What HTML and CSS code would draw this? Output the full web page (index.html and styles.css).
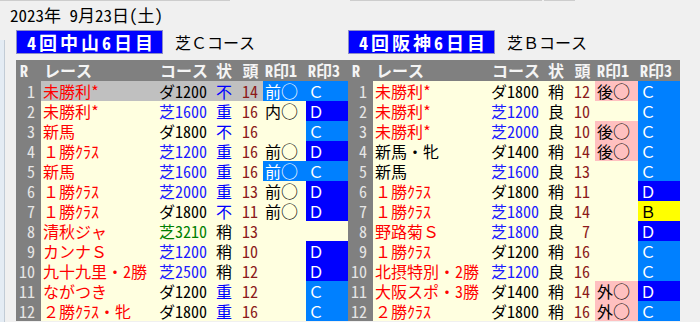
FILE: index.html
```html
<!DOCTYPE html>
<html lang="ja">
<head>
<meta charset="utf-8">
<title>開催</title>
<link rel="stylesheet" href="styles.css">
</head>
<body>
<div class="chrome"><span class="seg seg1"></span><span class="seg seg2"></span><span class="seg seg3"></span></div>
<div class="date">2023年 9月23日(土)</div>
<div class="meets">
  <section class="meet">
    <div class="meet-head"><span class="label">4回中山6日目</span><span class="track">芝Ｃコース</span></div>
    <table class="races">
      <colgroup><col class="c-r"><col class="c-name"><col class="c-crs"><col class="c-cond"><col class="c-cnt"><col class="c-m1"><col class="c-m3"></colgroup>
      <thead><tr><th class="h-r">R</th><th class="h-name">レース</th><th class="h-crs">コース</th><th class="h-cond">状</th><th class="h-cnt">頭</th><th class="h-m">R印1</th><th class="h-m">R印3</th></tr></thead>
      <tbody>
        <tr class="sel"><td class="n">1</td><td class="name red">未勝利*</td><td class="crs">ダ1200</td><td class="cond blue">不</td><td class="cnt">14</td><td class="m1 hl">前<span class="circ">○</span></td><td class="m3 c">Ｃ</td></tr>
        <tr><td class="n">2</td><td class="name red">未勝利*</td><td class="crs turf">芝1600</td><td class="cond blue">重</td><td class="cnt">16</td><td class="m1">内<span class="circ">○</span></td><td class="m3 d">Ｄ</td></tr>
        <tr><td class="n">3</td><td class="name red">新馬</td><td class="crs">ダ1800</td><td class="cond blue">不</td><td class="cnt">16</td><td class="m1"></td><td class="m3 c">Ｃ</td></tr>
        <tr><td class="n">4</td><td class="name red">１勝ｸﾗｽ</td><td class="crs turf">芝1200</td><td class="cond blue">重</td><td class="cnt">16</td><td class="m1">前<span class="circ">○</span></td><td class="m3 d">Ｄ</td></tr>
        <tr><td class="n">5</td><td class="name red">新馬</td><td class="crs turf">芝1600</td><td class="cond blue">重</td><td class="cnt">16</td><td class="m1 hl">前<span class="circ">○</span></td><td class="m3 c">Ｃ</td></tr>
        <tr><td class="n">6</td><td class="name red">１勝ｸﾗｽ</td><td class="crs turf">芝2000</td><td class="cond blue">重</td><td class="cnt">13</td><td class="m1">前<span class="circ">○</span></td><td class="m3 d">Ｄ</td></tr>
        <tr><td class="n">7</td><td class="name red">１勝ｸﾗｽ</td><td class="crs">ダ1800</td><td class="cond blue">不</td><td class="cnt">11</td><td class="m1">前<span class="circ">○</span></td><td class="m3 d">Ｄ</td></tr>
        <tr><td class="n">8</td><td class="name red">清秋ジャ</td><td class="crs green">芝3210</td><td class="cond">稍</td><td class="cnt">13</td><td class="m1"></td><td class="m3"></td></tr>
        <tr><td class="n">9</td><td class="name red">カンナＳ</td><td class="crs turf">芝1200</td><td class="cond">稍</td><td class="cnt">10</td><td class="m1"></td><td class="m3 d">Ｄ</td></tr>
        <tr><td class="n">10</td><td class="name red">九十九里・2勝</td><td class="crs turf">芝2500</td><td class="cond">稍</td><td class="cnt">12</td><td class="m1"></td><td class="m3 d">Ｄ</td></tr>
        <tr><td class="n">11</td><td class="name red">ながつき</td><td class="crs">ダ1200</td><td class="cond blue">重</td><td class="cnt">12</td><td class="m1"></td><td class="m3 c">Ｃ</td></tr>
        <tr><td class="n">12</td><td class="name red">２勝ｸﾗｽ・牝</td><td class="crs">ダ1800</td><td class="cond blue">重</td><td class="cnt">16</td><td class="m1"></td><td class="m3 c">Ｃ</td></tr>
      </tbody>
    </table>
  </section>
  <section class="meet">
    <div class="meet-head"><span class="label">4回阪神6日目</span><span class="track">芝Ｂコース</span></div>
    <table class="races">
      <colgroup><col class="c-r"><col class="c-name"><col class="c-crs"><col class="c-cond"><col class="c-cnt"><col class="c-m1"><col class="c-m3"></colgroup>
      <thead><tr><th class="h-r">R</th><th class="h-name">レース</th><th class="h-crs">コース</th><th class="h-cond">状</th><th class="h-cnt">頭</th><th class="h-m">R印1</th><th class="h-m">R印3</th></tr></thead>
      <tbody>
        <tr><td class="n">1</td><td class="name red">未勝利*</td><td class="crs">ダ1800</td><td class="cond">稍</td><td class="cnt">12</td><td class="m1 pink">後<span class="circ">○</span></td><td class="m3 c">Ｃ</td></tr>
        <tr><td class="n">2</td><td class="name red">未勝利*</td><td class="crs turf">芝1200</td><td class="cond">良</td><td class="cnt">10</td><td class="m1"></td><td class="m3 c">Ｃ</td></tr>
        <tr><td class="n">3</td><td class="name red">未勝利*</td><td class="crs turf">芝2000</td><td class="cond">良</td><td class="cnt">10</td><td class="m1 pink">後<span class="circ">○</span></td><td class="m3 c">Ｃ</td></tr>
        <tr><td class="n">4</td><td class="name">新馬・牝</td><td class="crs">ダ1400</td><td class="cond">稍</td><td class="cnt">14</td><td class="m1 pink">後<span class="circ">○</span></td><td class="m3 c">Ｃ</td></tr>
        <tr><td class="n">5</td><td class="name">新馬</td><td class="crs turf">芝1600</td><td class="cond">良</td><td class="cnt">13</td><td class="m1"></td><td class="m3 c">Ｃ</td></tr>
        <tr><td class="n">6</td><td class="name red">１勝ｸﾗｽ</td><td class="crs">ダ1800</td><td class="cond">稍</td><td class="cnt">11</td><td class="m1"></td><td class="m3 d">Ｄ</td></tr>
        <tr><td class="n">7</td><td class="name red">１勝ｸﾗｽ</td><td class="crs turf">芝1800</td><td class="cond">良</td><td class="cnt">14</td><td class="m1"></td><td class="m3 b">Ｂ</td></tr>
        <tr><td class="n">8</td><td class="name red">野路菊Ｓ</td><td class="crs turf">芝1800</td><td class="cond">良</td><td class="cnt">7</td><td class="m1"></td><td class="m3 d">Ｄ</td></tr>
        <tr><td class="n">9</td><td class="name red">１勝ｸﾗｽ</td><td class="crs">ダ1200</td><td class="cond">稍</td><td class="cnt">16</td><td class="m1"></td><td class="m3 c">Ｃ</td></tr>
        <tr><td class="n">10</td><td class="name red">北摂特別・2勝</td><td class="crs turf">芝1200</td><td class="cond">良</td><td class="cnt">16</td><td class="m1"></td><td class="m3 c">Ｃ</td></tr>
        <tr><td class="n">11</td><td class="name red">大阪スポ・3勝</td><td class="crs">ダ1400</td><td class="cond">稍</td><td class="cnt">14</td><td class="m1 pink">外<span class="circ">○</span></td><td class="m3 d">Ｄ</td></tr>
        <tr><td class="n">12</td><td class="name red">２勝ｸﾗｽ</td><td class="crs">ダ1800</td><td class="cond">稍</td><td class="cnt">16</td><td class="m1 pink">外<span class="circ">○</span></td><td class="m3 c">Ｃ</td></tr>
      </tbody>
    </table>
  </section>
</div>
</body>
</html>
```
FILE: styles.css
```css
* { box-sizing: border-box; }
html, body { margin: 0; padding: 0; }
body {
  width: 700px;
  height: 322px;
  overflow: hidden;
  background:
    linear-gradient(to right, #e4ecf4 0 4px, #c2ccd6 4px 5px, transparent 5px) no-repeat 0 40px / 5px 282px,
    #f0f0f0;
  font-family: "Noto Sans Mono CJK JP", "Noto Sans CJK JP", sans-serif;
  font-size: 16px;
  color: #000;
}
.chrome { display: flex; height: 1px; }
.seg { display: block; height: 1px; background: #cdcdcd; }
.seg1 { width: 230px; }
.seg2 { margin-left: 120px; width: 192px; }
.seg3 { margin-left: 2px; width: 31px; }

.date {
  margin-top: 4px;
  padding-left: 10px;
  height: 20px;
  line-height: 20px;
  font-size: 17px;
  white-space: nowrap;
}
.meets {
  display: grid;
  grid-template-columns: 332px 332px;
  padding-left: 16px;
  margin-top: 5px;
}
.meet { display: flex; flex-direction: column; }
.meet-head { display: flex; align-items: center; height: 24px; }
.label {
  width: 147px;
  height: 24px;
  background: #0000ff;
  border: 1px solid #8c8cc8;
  color: #fff;
  font-weight: 700;
  font-size: 18px;
  letter-spacing: 3px;
  padding-left: 10px;
  line-height: 22px;
  white-space: nowrap;
}
.track { margin-left: 12px; white-space: nowrap; }

.races {
  margin-top: 6px;
  border-collapse: collapse;
  table-layout: fixed;
  width: 332px;
}
.c-r { width: 25px; }
.c-name { width: 112px; }
.c-crs { width: 57px; }
.c-cond { width: 28px; }
.c-cnt { width: 25px; }
.c-m1 { width: 43px; }
.c-m3 { width: 42px; }

.races th {
  height: 21px;
  padding: 0;
  background: #808080;
  color: #f4f4f4;
  font-weight: 700;
  line-height: 21px;
  text-align: left;
  white-space: nowrap;
}
.races th.h-r { padding-left: 4px; }
.races th.h-name { padding-left: 3px; }
.races th.h-crs { text-align: right; padding-right: 2px; }
.races th.h-cond, .races th.h-cnt { text-align: center; }
.races th.h-m { padding-left: 2px; }

.races td {
  height: 20px;
  padding: 0;
  line-height: 20px;
  background: #ffffe0;
  white-space: nowrap;
}
.races td.n {
  background: #808080;
  color: #e6e6e6;
  text-align: right;
  padding-right: 6px;
}
.name { padding-left: 2px !important; }
.red { color: #ff0000; }
.crs { text-align: right; padding-right: 3px !important; }
.turf { color: #1a1aff; }
.green { color: #008000; }
.cond { text-align: center; }
.blue { color: #0000ff; }
.cnt { text-align: right; padding-right: 5px !important; color: #8c1a1a; }
.m1 { padding-left: 2px !important; }
.circ { font-size: 17px; line-height: 20px; }
.m3 { padding-left: 2px !important; color: #fff; }
.races td.hl { background: #0080ff; color: #fff; }
.races td.pink { background: #ffc0c0; }
.races td.c { background: #0080ff; }
.races td.d { background: #0000ff; }
.races td.b { background: #ffff00; color: #000; }
.races tr.sel td.name,
.races tr.sel td.crs,
.races tr.sel td.cond,
.races tr.sel td.cnt { background: #c0c0c0; }
```
